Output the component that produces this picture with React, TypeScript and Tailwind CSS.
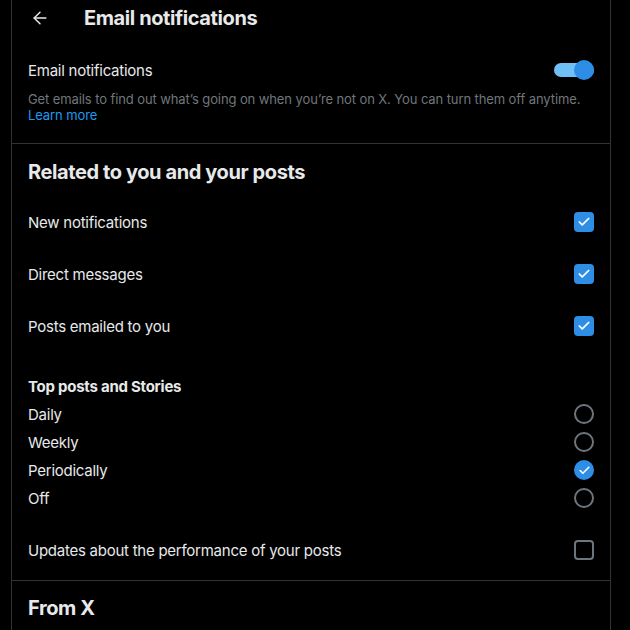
import { ArrowLeft, Check } from "lucide-react";

const blue = "bg-[#2e8ee5]";

const CheckBox = ({ checked }: { checked: boolean }) =>
  checked ? (
    <div className={`w-5 h-5 rounded-[4px] ${blue} flex items-center justify-center`}>
      <Check size={14} strokeWidth={3} className="text-white" />
    </div>
  ) : (
    <div className="w-5 h-5 rounded-[4px] border-2 border-[#6e767d]" />
  );

const Radio = ({ checked }: { checked: boolean }) =>
  checked ? (
    <div className={`w-5 h-5 rounded-full ${blue} flex items-center justify-center`}>
      <Check size={13} strokeWidth={3} className="text-white" />
    </div>
  ) : (
    <div className="w-5 h-5 rounded-full border-2 border-[#6e767d]" />
  );

const App: React.FC = () => {
  const rows = ["New notifications", "Direct messages", "Posts emailed to you"];
  const freq = [
    { label: "Daily", on: false },
    { label: "Weekly", on: false },
    { label: "Periodically", on: true },
    { label: "Off", on: false },
  ];

  return (
    <div className="min-h-screen h-[630px] overflow-hidden bg-black text-[#e7e9ea] font-['Inter',sans-serif]">
      <div className="ml-[11px] w-[600px] h-full border-x border-[#2f3336]">
        {/* Header */}
        <div className="h-[35px] flex items-center">
          <ArrowLeft size={20} strokeWidth={1.75} className="ml-[18px] text-[#e7e9ea]" />
          <h1 className="ml-[34px] text-[20px] leading-6 font-bold tracking-[-0.4px]">Email notifications</h1>
        </div>

        {/* Email toggle */}
        <div className="px-4 pt-[15px] pb-[19px] border-b border-[#2f3336]">
          <div className="h-10 flex items-center justify-between">
            <span className="text-[15px] tracking-[-0.25px] pt-[2px]">Email notifications</span>
            <div className="relative w-10 h-5 flex items-center">
              <div className="w-10 h-[14px] rounded-full bg-[#70bff7]" />
              <div className={`absolute right-0 w-5 h-5 rounded-full ${blue}`} />
            </div>
          </div>
          <p className="mt-[1px] mb-[1px] text-[13px] leading-4 text-[#71767b] tracking-[-0.1px]">
            Get emails to find out what’s going on when you’re not on X. You can turn them off anytime.
            <br />
            <span className="text-[#1d9bf0]">Learn more</span>
          </p>
        </div>

        {/* Related section */}
        <div className="px-4 pt-4 pb-1 border-b border-[#2f3336]">
          <h2 className="text-[20px] leading-6 font-bold tracking-[-0.4px]">Related to you and your posts</h2>
          <div className="mt-3">
            {rows.map((r) => (
              <div key={r} className="h-[52px] flex items-center justify-between">
                <span className="text-[15px] tracking-[-0.25px] pt-[2px]">{r}</span>
                <CheckBox checked />
              </div>
            ))}
          </div>
          <h3 className="mt-6 pt-[1px] text-[15px] leading-5 font-bold tracking-[-0.25px]">Top posts and Stories</h3>
          <div className="mt-[3px]">
            {freq.map((f) => (
              <div key={f.label} className="h-7 flex items-center justify-between">
                <span className="text-[15px] tracking-[-0.25px] pt-[2px]">{f.label}</span>
                <Radio checked={f.on} />
              </div>
            ))}
          </div>
          <div className="mt-3 h-[52px] flex items-center justify-between">
            <span className="text-[15px] tracking-[-0.25px] pt-[2px]">Updates about the performance of your posts</span>
            <CheckBox checked={false} />
          </div>
        </div>

        {/* From X */}
        <div className="px-4 pt-[15px]">
          <h2 className="text-[20px] leading-6 font-bold tracking-[-0.4px]">From X</h2>
        </div>
      </div>
    </div>
  );
};

export default App;
